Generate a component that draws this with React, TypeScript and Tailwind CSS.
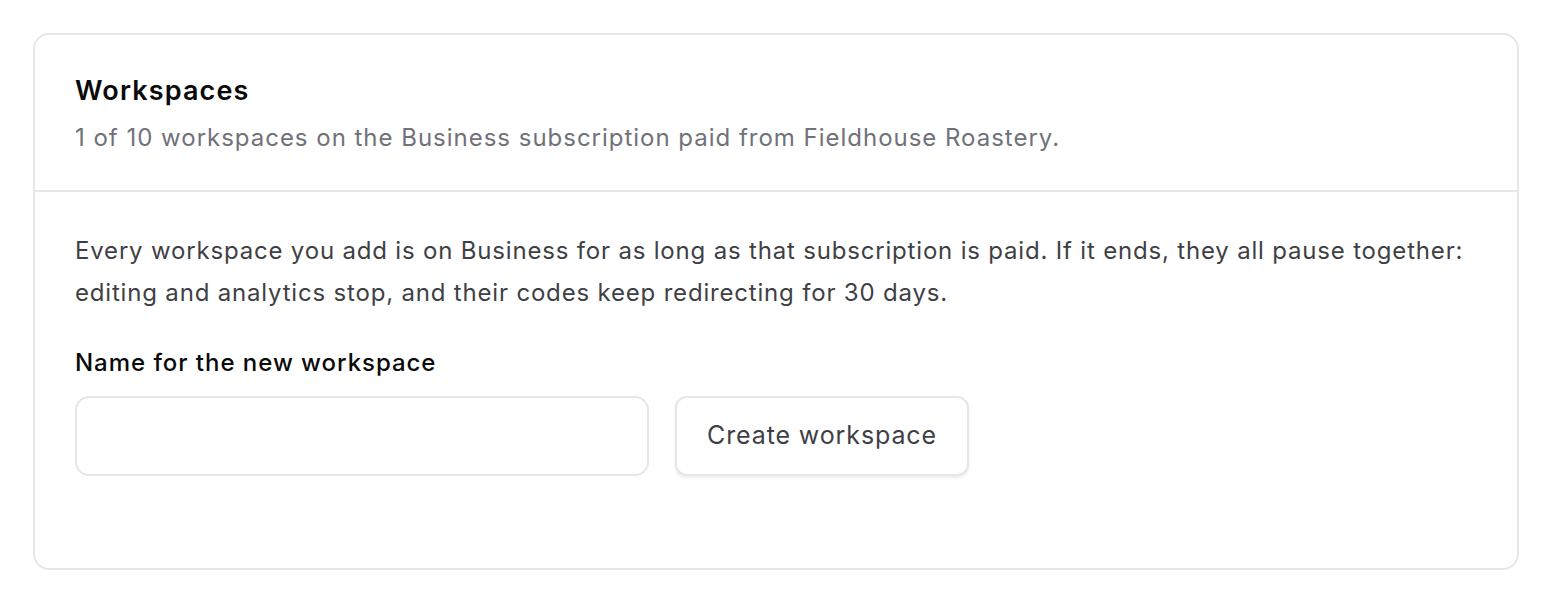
import React from "react"

export default function App() {
    return (
        <div className="min-h-screen bg-white p-[33px]" style={{ fontFamily: 'Inter, "Liberation Sans", sans-serif' }}>
            <section className="rounded-[16px] border-2 border-[#e7e7e7] bg-white">

                {/* Header */}
                <div className="border-b-2 border-[#e7e7e7] px-[40px] pt-[38px] pb-[34px]">
                    <h2 className="text-[27px] leading-[36px] font-semibold tracking-[0.042em] text-[#0a0a0a]">Workspaces</h2>
                    <p className="mt-[11px] text-[24px] leading-[36px] tracking-[0.041em] text-[#71717a]">
                        1 of 10 workspaces on the Business subscription paid from Fieldhouse Roastery.
                    </p>
                </div>

                {/* Body */}
                <div className="px-[40px] pt-[38px] pb-[92px]">
                    <p className="text-[24px] leading-[42px] tracking-[0.034em] text-[#3f3f46]">
                        Every workspace you add is on Business for as long as that subscription is paid. If it ends, they all pause together:
                        <br />
                        editing and analytics stop, and their codes keep redirecting for 30 days.
                    </p>

                    <label className="mt-[31px] block text-[24px] leading-[36px] font-medium tracking-[0.04em] text-[#0a0a0a]">
                        Name for the new workspace
                    </label>

                    <div className="mt-[15px] flex items-center gap-[26px]">
                        <input
                            type="text"
                            className="h-[80px] w-[574px] rounded-[14px] border-2 border-[#e7e7e7] bg-white px-5 text-[24px] outline-none"
                        />
                        <button className="h-[80px] w-[294px] rounded-[12px] border-2 border-[#e7e7e7] bg-white text-[25px] tracking-[0.035em] text-[#3f3f46] shadow-[0_1.5px_3px_rgba(0,0,0,0.08)]">
                            Create workspace
                        </button>
                    </div>
                </div>

            </section>
        </div>
    )
}
